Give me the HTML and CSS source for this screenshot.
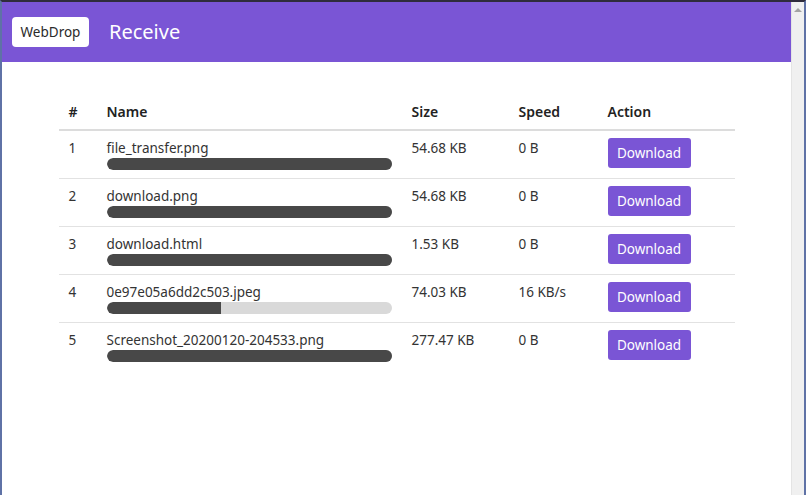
FILE: index.html
```html
<!DOCTYPE html>
<html lang="en">
<head>
<meta charset="utf-8">
<title>WebDrop - Receive</title>
<link rel="stylesheet" href="styles.css">
</head>
<body>
<div class="frame">
  <div class="main">
    <nav class="navbar">
      <button class="brand">WebDrop</button>
      <span class="title">Receive</span>
    </nav>
    <table class="files">
      <thead>
        <tr>
          <th class="c-num">#</th>
          <th class="c-name">Name</th>
          <th class="c-size">Size</th>
          <th class="c-speed">Speed</th>
          <th class="c-action">Action</th>
        </tr>
      </thead>
      <tbody>
        <tr>
          <td>1</td>
          <td><div class="fname">file_transfer.png</div><div class="bar"><div class="fill" style="width:100%"></div></div></td>
          <td>54.68 KB</td>
          <td>0 B</td>
          <td><button class="dl">Download</button></td>
        </tr>
        <tr>
          <td>2</td>
          <td><div class="fname">download.png</div><div class="bar"><div class="fill" style="width:100%"></div></div></td>
          <td>54.68 KB</td>
          <td>0 B</td>
          <td><button class="dl">Download</button></td>
        </tr>
        <tr>
          <td>3</td>
          <td><div class="fname">download.html</div><div class="bar"><div class="fill" style="width:100%"></div></div></td>
          <td>1.53 KB</td>
          <td>0 B</td>
          <td><button class="dl">Download</button></td>
        </tr>
        <tr>
          <td>4</td>
          <td><div class="fname">0e97e05a6dd2c503.jpeg</div><div class="bar"><div class="fill" style="width:40%"></div></div></td>
          <td>74.03 KB</td>
          <td>16 KB/s</td>
          <td><button class="dl">Download</button></td>
        </tr>
        <tr>
          <td>5</td>
          <td><div class="fname">Screenshot_20200120-204533.png</div><div class="bar"><div class="fill" style="width:100%"></div></div></td>
          <td>277.47 KB</td>
          <td>0 B</td>
          <td><button class="dl">Download</button></td>
        </tr>
      </tbody>
    </table>
  </div>
  <div class="scrollbar"><span class="arrow"></span></div>
</div>
</body>
</html>
```
FILE: styles.css
```css
* { box-sizing: border-box; }
html, body { margin: 0; padding: 0; background: #ffffff; }
body {
  font-family: "Noto Sans", "Open Sans", sans-serif;
  color: #333333;
}
.frame {
  display: flex;
  height: 495px;
  border-top: 2px solid #2f2c3c;
  border-left: 2px solid #5f72a6;
  border-right: 2px solid #5f72a6;
}
.main {
  flex: 1;
  min-width: 0;
}
.scrollbar {
  width: 13px;
  background: #f0f0f0;
  border-left: 1px solid #e4e4e4;
  display: flex;
  justify-content: center;
  padding-top: 6px;
}
.arrow {
  width: 0;
  height: 0;
  border-left: 4px solid transparent;
  border-right: 4px solid transparent;
  border-bottom: 4px solid #a3a3a3;
}
.navbar {
  height: 60px;
  background: #7a55d5;
  display: flex;
  align-items: center;
  padding-left: 10px;
  gap: 20px;
}
.brand {
  height: 30px;
  width: 77px;
  background: #ffffff;
  border: none;
  border-radius: 4px;
  font-family: "Noto Sans", "Open Sans", sans-serif;
  font-size: 13.5px;
  color: #2a2a2a;
  padding: 0;
}
.title {
  color: #ffffff;
  font-size: 20px;
  margin-top: -2px;
}
.files {
  width: 676px;
  margin: 32px auto 0;
  border-collapse: collapse;
  font-size: 13.5px;
  line-height: 20px;
}
.files th {
  text-align: left;
  font-weight: 600;
  color: #222222;
  font-size: 14px;
  padding: 8px 10px 7px;
  border-bottom: 2px solid #dcdcdc;
}
.files td {
  padding: 7px 10px 8px;
  vertical-align: top;
  border-bottom: 1px solid #e2e2e2;
}
.files tbody tr:last-child td { border-bottom: none; }
.c-num { width: 38px; }
.c-name { width: 305px; }
.c-size { width: 107px; }
.c-speed { width: 89px; }
.c-action { width: 137px; }
.fname { height: 20px; }
.bar {
  height: 12px;
  border-radius: 6px;
  background: #d9d9d9;
  overflow: hidden;
}
.fill {
  height: 100%;
  background: #484848;
  border-radius: 6px 0 0 6px;
}
.dl {
  display: block;
  height: 30px;
  width: 83px;
  background: #7a55d5;
  color: #ffffff;
  border: none;
  border-radius: 3px;
  font-family: "Noto Sans", "Open Sans", sans-serif;
  font-size: 13.5px;
  padding: 0;
}
```
